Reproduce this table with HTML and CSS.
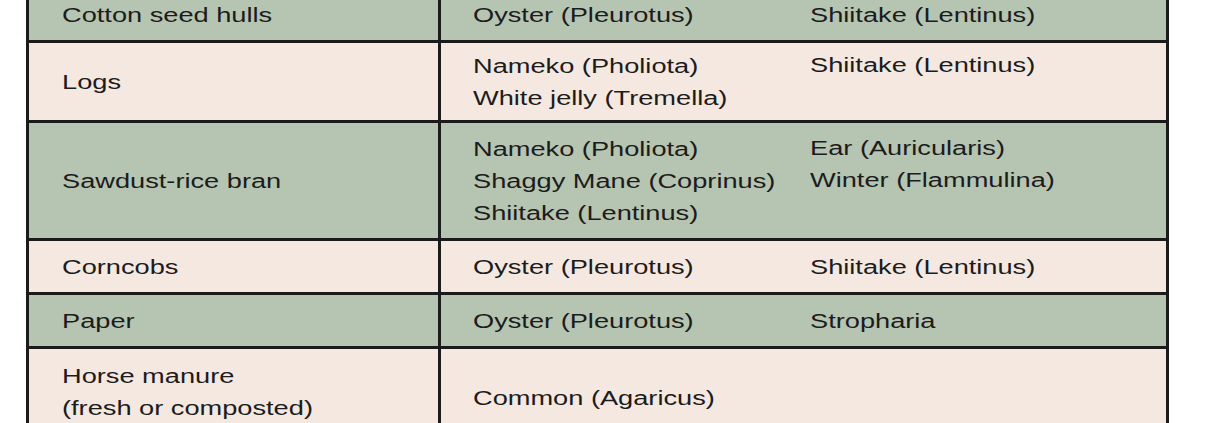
FILE: index.html
```html
<!DOCTYPE html>
<html>
<head>
<meta charset="utf-8">
<link rel="stylesheet" href="styles.css">
</head>
<body>
<div class="tbl">
  <div class="row green h1">
    <div class="c1"><span class="t">Cotton seed hulls</span></div>
    <div class="c2"><span class="t">Oyster (Pleurotus)</span></div>
    <div class="c3"><span class="t">Shiitake (Lentinus)</span></div>
  </div>
  <div class="row pink h2">
    <div class="c1"><span class="t">Logs</span></div>
    <div class="c2"><span class="t">Nameko (Pholiota)<br>White jelly (Tremella)</span></div>
    <div class="c3 top"><span class="t">Shiitake (Lentinus)</span></div>
  </div>
  <div class="row green h3">
    <div class="c1"><span class="t">Sawdust-rice bran</span></div>
    <div class="c2"><span class="t">Nameko (Pholiota)<br>Shaggy Mane (Coprinus)<br>Shiitake (Lentinus)</span></div>
    <div class="c3 top"><span class="t">Ear (Auricularis)<br>Winter (Flammulina)</span></div>
  </div>
  <div class="row pink h1">
    <div class="c1"><span class="t">Corncobs</span></div>
    <div class="c2"><span class="t">Oyster (Pleurotus)</span></div>
    <div class="c3"><span class="t">Shiitake (Lentinus)</span></div>
  </div>
  <div class="row green h1">
    <div class="c1"><span class="t">Paper</span></div>
    <div class="c2"><span class="t">Oyster (Pleurotus)</span></div>
    <div class="c3"><span class="t">Stropharia</span></div>
  </div>
  <div class="row pink h6">
    <div class="c1 up"><span class="t">Horse manure<br>(fresh or composted)</span></div>
    <div class="c2"><span class="t">Common (Agaricus)</span></div>
    <div class="c3"></div>
  </div>
</div>
</body>
</html>
```

FILE: styles.css
```css
html, body {
  margin: 0;
  padding: 0;
  background: #ffffff;
  overflow: hidden;
}

.tbl {
  margin: -14px 0 0 26px;
  width: 1143px;
  border: 3px solid #1b1b1b;
  box-sizing: border-box;
  font-family: "Liberation Sans", Arial, sans-serif;
  font-size: 20px;
  line-height: 32px;
  color: #1c1c1c;
}

.row {
  display: flex;
  border-top: 3px solid #1b1b1b;
}

.row:first-child {
  border-top: none;
}

.green { background: #b6c4b2; }
.pink { background: #f5e8e1; }

.h1 { height: 51px; }
.h2 { height: 77px; }
.h3 { height: 115px; }
.h6 { height: 98px; }

.c1 {
  width: 376px;
  flex: none;
  border-right: 3px solid #1b1b1b;
  padding-left: 33px;
  display: flex;
  align-items: center;
}

.c2 {
  width: 337px;
  flex: none;
  padding-left: 32px;
  display: flex;
  align-items: center;
}

.c3 {
  flex: 1;
  display: flex;
  align-items: center;
}

.c3.top {
  align-items: flex-start;
  padding-top: 6px;
}

.h3 .c3.top {
  padding-top: 9px;
}

.c1.up {
  align-items: flex-start;
  padding-top: 11px;
}

.t {
  display: inline-block;
  white-space: nowrap;
  transform: scaleX(1.36);
  transform-origin: left center;
}
```
